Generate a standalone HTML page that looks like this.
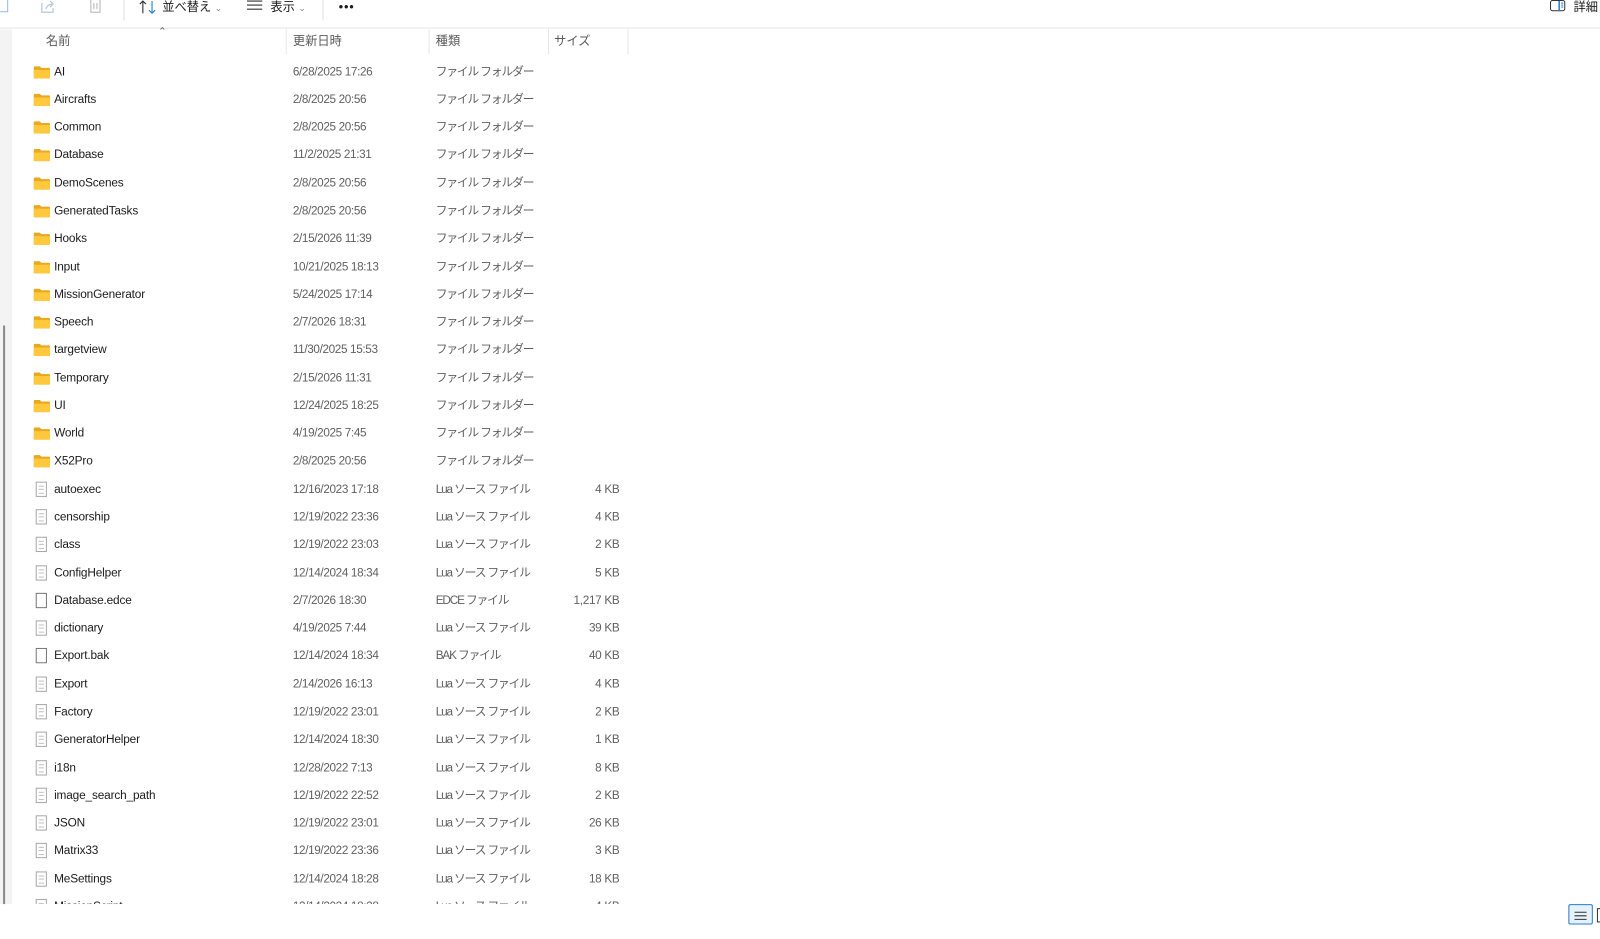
<!DOCTYPE html>
<html><head><meta charset="utf-8"><style>
*{margin:0;padding:0;box-sizing:border-box}
body{width:1600px;height:920px;background:#fff;font-family:"Segoe UI","Liberation Sans","Noto Sans CJK JP",sans-serif;font-size:12px;color:#1b1b1b;position:relative;overflow:hidden}
#w{position:absolute;left:0;top:0;width:1568px;height:902px;transform:scale(1.0204);transform-origin:0 0}
.tb{position:absolute;left:0;top:0;width:1568px;height:28px;border-bottom:1px solid #e5e5e5;background:#fff}
.t{position:absolute;top:0;font-size:12px;color:#1b1b1b;line-height:14px}
.side{position:absolute;left:0;top:29px;width:12px;height:857px;background:#f3f3f3}
.sb{position:absolute;left:3px;top:290px;width:2px;height:580px;background:#8a8a8a}
.hdr{position:absolute;top:31px;height:18px;font-size:12px;color:#5a5a5a;line-height:18px}
.sep{position:absolute;top:29px;width:1px;height:24px;background:#e5e5e5}
.list{position:absolute;left:12px;top:53px;width:1556px;height:833px;overflow:hidden}
.r{position:absolute;left:0;height:20px;width:620px;line-height:20px;top:0}
.r .n{position:absolute;left:41px;color:#1b1b1b;font-size:11.6px;letter-spacing:-0.15px}
.r .d{position:absolute;left:275px;color:#5f5f5f;font-size:11.5px;letter-spacing:-0.35px}
.r .k{position:absolute;left:415px;color:#5f5f5f;font-size:11.5px;letter-spacing:-1.1px}
.r .s{position:absolute;right:25px;color:#5f5f5f;text-align:right;font-size:11.5px;letter-spacing:-0.3px}
.f{position:absolute;left:21px;top:3px;width:16px;height:13px}
.fi{position:absolute;left:23px;top:2px;width:11px;height:15px;border:1px solid #a8a8a8;background:#fff}
.fi.l::before{content:"";position:absolute;left:2px;top:3px;width:5px;height:6px;border-top:1px solid #c0c0c0;border-bottom:1px solid #c0c0c0}
.fi.l::after{content:"";position:absolute;left:2px;top:6px;width:5px;height:1px;background:#c0c0c0}
.bot{position:absolute;left:0;top:886px;width:1568px;height:34px;background:#fff}
</style></head><body><div id="w">
<div class="tb">
  <div style="position:absolute;left:0;top:0;width:8px;height:12px;border:1px solid #9bbbe0;border-left:none;border-top:none"></div>
  <svg style="position:absolute;left:39px;top:0" width="16" height="14"><path d="M2 3v9h11V8M6 9c1-4 4-5 7-5M10 1l3 3-3 3" fill="none" stroke="#b8c8dc" stroke-width="1.2"/></svg>
  <svg style="position:absolute;left:86px;top:0" width="16" height="14"><path d="M3 0v12h9V0M6 3v6M9 3v6" fill="none" stroke="#c0c0c0" stroke-width="1.2"/></svg>
  <div style="position:absolute;left:121px;top:0;width:1px;height:20px;background:#e0e0e0"></div>
  <svg style="position:absolute;left:136px;top:0" width="18" height="14"><path d="M4 13V1M1 4l3-3 3 3" fill="none" stroke="#333" stroke-width="1.1"/><path d="M13 1v12M10 10l3 3 3-3" fill="none" stroke="#2a7ad5" stroke-width="1.1"/></svg>
  <div class="t" style="left:159px">並べ替え <span style="color:#888;font-size:9px">⌄</span></div>
  <svg style="position:absolute;left:242px;top:0" width="16" height="12"><path d="M0 1h15M0 5h15M0 9h15" stroke="#333" stroke-width="1.1"/></svg>
  <div class="t" style="left:265px">表示 <span style="color:#888;font-size:9px">⌄</span></div>
  <div style="position:absolute;left:316px;top:0;width:1px;height:20px;background:#e0e0e0"></div>
  <div class="t" style="left:332px;font-weight:bold;letter-spacing:1px">•••</div>
  <svg style="position:absolute;left:1519px;top:0" width="16" height="12"><rect x="0.5" y="0.5" width="14" height="10" rx="2" fill="none" stroke="#333"/><path d="M9 1v10" stroke="#2a7ad5" stroke-width="1.5"/><path d="M11 3h2M11 5h2M11 7h2" stroke="#2a7ad5"/></svg>
  <div class="t" style="left:1542px">詳細</div>
</div>
<div class="side"><div class="sb"></div></div>
<div style="position:absolute;left:155px;top:26px;font-size:10px;color:#666">⌃</div>
<div class="hdr" style="left:45px">名前</div>
<div class="hdr" style="left:287px">更新日時</div>
<div class="hdr" style="left:427px">種類</div>
<div class="hdr" style="left:543px">サイズ</div>
<div class="sep" style="left:280px"></div>
<div class="sep" style="left:420px"></div>
<div class="sep" style="left:537px"></div>
<div class="sep" style="left:615px"></div>
<svg width="0" height="0" style="position:absolute"><defs><symbol id="fd" viewBox="0 0 16 13"><path d="M0 2a1 1 0 0 1 1-1h5l1.5 1.5H15a1 1 0 0 1 1 1V12a1 1 0 0 1-1 1H1a1 1 0 0 1-1-1z" fill="#e8a820"/><path d="M0 4.5h16V12a1 1 0 0 1-1 1H1a1 1 0 0 1-1-1z" fill="#ffc83d"/></symbol></defs></svg>
<div class="list">
<div class="r" style="top:7.5px"><svg class="f"><use href="#fd"/></svg><span class="n">AI</span><span class="d">6/28/2025 17:26</span><span class="k">ファイル フォルダー</span></div>
<div class="r" style="top:34.8px"><svg class="f"><use href="#fd"/></svg><span class="n">Aircrafts</span><span class="d">2/8/2025 20:56</span><span class="k">ファイル フォルダー</span></div>
<div class="r" style="top:62.1px"><svg class="f"><use href="#fd"/></svg><span class="n">Common</span><span class="d">2/8/2025 20:56</span><span class="k">ファイル フォルダー</span></div>
<div class="r" style="top:89.3px"><svg class="f"><use href="#fd"/></svg><span class="n">Database</span><span class="d">11/2/2025 21:31</span><span class="k">ファイル フォルダー</span></div>
<div class="r" style="top:116.6px"><svg class="f"><use href="#fd"/></svg><span class="n">DemoScenes</span><span class="d">2/8/2025 20:56</span><span class="k">ファイル フォルダー</span></div>
<div class="r" style="top:143.9px"><svg class="f"><use href="#fd"/></svg><span class="n">GeneratedTasks</span><span class="d">2/8/2025 20:56</span><span class="k">ファイル フォルダー</span></div>
<div class="r" style="top:171.2px"><svg class="f"><use href="#fd"/></svg><span class="n">Hooks</span><span class="d">2/15/2026 11:39</span><span class="k">ファイル フォルダー</span></div>
<div class="r" style="top:198.5px"><svg class="f"><use href="#fd"/></svg><span class="n">Input</span><span class="d">10/21/2025 18:13</span><span class="k">ファイル フォルダー</span></div>
<div class="r" style="top:225.7px"><svg class="f"><use href="#fd"/></svg><span class="n">MissionGenerator</span><span class="d">5/24/2025 17:14</span><span class="k">ファイル フォルダー</span></div>
<div class="r" style="top:253px"><svg class="f"><use href="#fd"/></svg><span class="n">Speech</span><span class="d">2/7/2026 18:31</span><span class="k">ファイル フォルダー</span></div>
<div class="r" style="top:280.3px"><svg class="f"><use href="#fd"/></svg><span class="n">targetview</span><span class="d">11/30/2025 15:53</span><span class="k">ファイル フォルダー</span></div>
<div class="r" style="top:307.6px"><svg class="f"><use href="#fd"/></svg><span class="n">Temporary</span><span class="d">2/15/2026 11:31</span><span class="k">ファイル フォルダー</span></div>
<div class="r" style="top:334.9px"><svg class="f"><use href="#fd"/></svg><span class="n">UI</span><span class="d">12/24/2025 18:25</span><span class="k">ファイル フォルダー</span></div>
<div class="r" style="top:362.1px"><svg class="f"><use href="#fd"/></svg><span class="n">World</span><span class="d">4/19/2025 7:45</span><span class="k">ファイル フォルダー</span></div>
<div class="r" style="top:389.4px"><svg class="f"><use href="#fd"/></svg><span class="n">X52Pro</span><span class="d">2/8/2025 20:56</span><span class="k">ファイル フォルダー</span></div>
<div class="r" style="top:416.7px"><i class="fi l"></i><span class="n">autoexec</span><span class="d">12/16/2023 17:18</span><span class="k">Lua ソース ファイル</span><span class="s">4 KB</span></div>
<div class="r" style="top:444px"><i class="fi l"></i><span class="n">censorship</span><span class="d">12/19/2022 23:36</span><span class="k">Lua ソース ファイル</span><span class="s">4 KB</span></div>
<div class="r" style="top:471.3px"><i class="fi l"></i><span class="n">class</span><span class="d">12/19/2022 23:03</span><span class="k">Lua ソース ファイル</span><span class="s">2 KB</span></div>
<div class="r" style="top:498.5px"><i class="fi l"></i><span class="n">ConfigHelper</span><span class="d">12/14/2024 18:34</span><span class="k">Lua ソース ファイル</span><span class="s">5 KB</span></div>
<div class="r" style="top:525.8px"><i class="fi" style="border-color:#777"></i><span class="n">Database.edce</span><span class="d">2/7/2026 18:30</span><span class="k">EDCE ファイル</span><span class="s">1,217 KB</span></div>
<div class="r" style="top:553.1px"><i class="fi l"></i><span class="n">dictionary</span><span class="d">4/19/2025 7:44</span><span class="k">Lua ソース ファイル</span><span class="s">39 KB</span></div>
<div class="r" style="top:580.4px"><i class="fi" style="border-color:#777"></i><span class="n">Export.bak</span><span class="d">12/14/2024 18:34</span><span class="k">BAK ファイル</span><span class="s">40 KB</span></div>
<div class="r" style="top:607.7px"><i class="fi l"></i><span class="n">Export</span><span class="d">2/14/2026 16:13</span><span class="k">Lua ソース ファイル</span><span class="s">4 KB</span></div>
<div class="r" style="top:634.9px"><i class="fi l"></i><span class="n">Factory</span><span class="d">12/19/2022 23:01</span><span class="k">Lua ソース ファイル</span><span class="s">2 KB</span></div>
<div class="r" style="top:662.2px"><i class="fi l"></i><span class="n">GeneratorHelper</span><span class="d">12/14/2024 18:30</span><span class="k">Lua ソース ファイル</span><span class="s">1 KB</span></div>
<div class="r" style="top:689.5px"><i class="fi l"></i><span class="n">i18n</span><span class="d">12/28/2022 7:13</span><span class="k">Lua ソース ファイル</span><span class="s">8 KB</span></div>
<div class="r" style="top:716.8px"><i class="fi l"></i><span class="n">image_search_path</span><span class="d">12/19/2022 22:52</span><span class="k">Lua ソース ファイル</span><span class="s">2 KB</span></div>
<div class="r" style="top:744.1px"><i class="fi l"></i><span class="n">JSON</span><span class="d">12/19/2022 23:01</span><span class="k">Lua ソース ファイル</span><span class="s">26 KB</span></div>
<div class="r" style="top:771.3px"><i class="fi l"></i><span class="n">Matrix33</span><span class="d">12/19/2022 23:36</span><span class="k">Lua ソース ファイル</span><span class="s">3 KB</span></div>
<div class="r" style="top:798.6px"><i class="fi l"></i><span class="n">MeSettings</span><span class="d">12/14/2024 18:28</span><span class="k">Lua ソース ファイル</span><span class="s">18 KB</span></div>
<div class="r" style="top:825.9px"><i class="fi l"></i><span class="n">MissionScript</span><span class="d">12/14/2024 18:28</span><span class="k">Lua ソース ファイル</span><span class="s">4 KB</span></div>
</div>
<div class="bot">
  <div style="position:absolute;left:1537px;top:0;width:24px;height:20px;border:1px solid #2a7ad5;background:#e5f1fb;border-radius:2px"><svg style="position:absolute;left:5px;top:6px" width="12" height="9"><path d="M0 1h12M0 4.5h12M0 8h12" stroke="#333"/></svg></div>
  <div style="position:absolute;left:1565px;top:4px;width:5px;height:14px;border:1px solid #333"></div>
</div>
</div></body></html>
